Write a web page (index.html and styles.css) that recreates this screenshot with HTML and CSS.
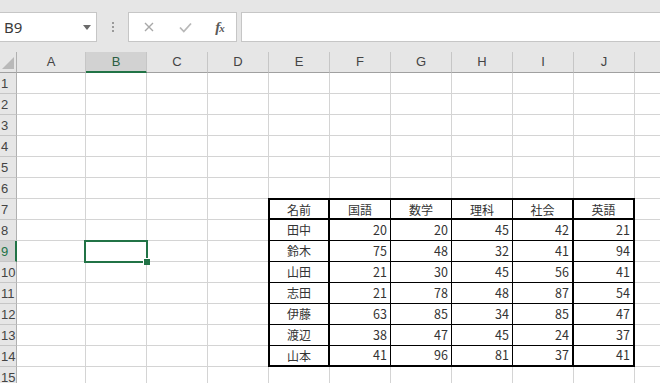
FILE: index.html
```html
<!DOCTYPE html>
<html lang="ja">
<head>
<meta charset="utf-8">
<title>Sheet</title>
<link rel="stylesheet" href="styles.css">
</head>
<body>
<div class="app">
  <div class="toolbar">
    <div class="namebox">
      <span class="name">B9</span>
      <svg class="dd" width="8" height="5" viewBox="0 0 8 5"><polygon points="0,0 8,0 4,5" fill="#6a6a6a"/></svg>
    </div>
    <div class="grip"><i></i><i></i><i></i></div>
    <div class="fbtns">
      <svg class="ico" width="10" height="10" viewBox="0 0 10 10"><path d="M1 1L9 9M9 1L1 9" stroke="#a8a8a8" stroke-width="1.4" fill="none"/></svg>
      <svg class="ico" width="13" height="11" viewBox="0 0 13 11"><path d="M1 5.5L4.8 9.5L12 1.5" stroke="#b8b8b8" stroke-width="1.8" fill="none"/></svg>
      <span class="fx">f<span class="fxx">x</span></span>
    </div>
    <div class="finput"></div>
  </div>

  <div class="sheet">
    <div class="corner"><svg width="12" height="12" viewBox="0 0 12 12"><polygon points="12,0 12,12 0,12" fill="#b9b9b9"/></svg></div>
    <div class="ch">A</div>
    <div class="ch sel-col">B</div>
    <div class="ch">C</div>
    <div class="ch">D</div>
    <div class="ch">E</div>
    <div class="ch">F</div>
    <div class="ch">G</div>
    <div class="ch">H</div>
    <div class="ch">I</div>
    <div class="ch">J</div>
    <div class="ch last"></div>

    <div class="cells"></div>

    <div class="rh">1</div>
    <div class="rh">2</div>
    <div class="rh">3</div>
    <div class="rh">4</div>
    <div class="rh">5</div>
    <div class="rh">6</div>
    <div class="rh">7</div>
    <div class="rh">8</div>
    <div class="rh sel-row">9</div>
    <div class="rh">10</div>
    <div class="rh">11</div>
    <div class="rh">12</div>
    <div class="rh">13</div>
    <div class="rh">14</div>
    <div class="rh">15</div>

    <div class="tbl">
      <div class="tc hd c1">名前</div><div class="tc hd">国語</div><div class="tc hd">数学</div><div class="tc hd">理科</div><div class="tc hd c5">社会</div><div class="tc hd c6">英語</div>

      <div class="tc nm c1">田中</div><div class="tc n">20</div><div class="tc n">20</div><div class="tc n">45</div><div class="tc n c5">42</div><div class="tc n c6">21</div>
      <div class="tc nm c1">鈴木</div><div class="tc n">75</div><div class="tc n">48</div><div class="tc n">32</div><div class="tc n c5">41</div><div class="tc n c6">94</div>
      <div class="tc nm c1">山田</div><div class="tc n">21</div><div class="tc n">30</div><div class="tc n">45</div><div class="tc n c5">56</div><div class="tc n c6">41</div>
      <div class="tc nm c1">志田</div><div class="tc n">21</div><div class="tc n">78</div><div class="tc n">48</div><div class="tc n c5">87</div><div class="tc n c6">54</div>
      <div class="tc nm c1">伊藤</div><div class="tc n">63</div><div class="tc n">85</div><div class="tc n">34</div><div class="tc n c5">85</div><div class="tc n c6">47</div>
      <div class="tc nm c1">渡辺</div><div class="tc n">38</div><div class="tc n">47</div><div class="tc n">45</div><div class="tc n c5">24</div><div class="tc n c6">37</div>
      <div class="tc nm c1 lr">山本</div><div class="tc n lr">41</div><div class="tc n lr">96</div><div class="tc n lr">81</div><div class="tc n c5 lr">37</div><div class="tc n c6 lr">41</div>
    </div>

    <div class="sel"></div>
  </div>
</div>
</body>
</html>
```

FILE: styles.css
```css
* { box-sizing: border-box; }

html, body {
  margin: 0;
  padding: 0;
  width: 660px;
  height: 383px;
  overflow: hidden;
  background: #ffffff;
}

.app {
  width: 660px;
  height: 383px;
  overflow: hidden;
  font-family: "Liberation Sans", "Noto Sans CJK JP", sans-serif;
}

/* ---------- formula bar ---------- */
.toolbar {
  height: 52px;
  background: #e6e6e6;
  display: flex;
  align-items: flex-start;
  padding-top: 12px;
}

.namebox {
  margin-left: -1px;
  width: 98px;
  height: 30px;
  background: #ffffff;
  border: 1px solid #c6c6c6;
  display: flex;
  align-items: center;
  padding-left: 4px;
}

.name {
  font-family: "Noto Sans", "Liberation Sans", sans-serif;
  font-size: 15px;
  color: #3a3a3a;
}

.dd {
  margin-left: auto;
  margin-right: 5px;
}

.grip {
  width: 31px;
  height: 30px;
  display: flex;
  flex-direction: column;
  align-items: center;
  justify-content: center;
  gap: 2px;
}

.grip i {
  display: block;
  width: 2px;
  height: 2px;
  background: #9a9a9a;
}

.fbtns {
  width: 109px;
  height: 30px;
  background: #ffffff;
  border: 1px solid #c6c6c6;
  display: grid;
  grid-template-columns: 36px 36px 1fr;
  align-items: center;
  justify-items: center;
  padding-left: 2px;
}

.fx {
  font-family: "Liberation Serif", "DejaVu Serif", serif;
  font-style: italic;
  font-weight: bold;
  font-size: 15px;
  color: #5a5a5a;
  letter-spacing: -1px;
}

.fxx {
  font-size: 11px;
}

.finput {
  margin-left: 4px;
  flex: 1;
  height: 30px;
  background: #ffffff;
  border: 1px solid #c6c6c6;
  border-right: none;
}

/* ---------- sheet ---------- */
.sheet {
  display: grid;
  grid-template-columns: 17px 69px repeat(10, 61px) 1fr;
  grid-template-rows: repeat(16, 21px);
  font-size: 13px;
  color: #444444;
}

.corner {
  background: #e6e6e6;
  border-right: 1px solid #b0b0b0;
  border-bottom: 1px solid #a0a0a0;
  display: flex;
  align-items: flex-end;
  justify-content: flex-end;
  padding: 0 2px 3px 0;
}

.ch {
  background: #e6e6e6;
  border-right: 1px solid #c6c6c6;
  border-bottom: 1px solid #a0a0a0;
  display: flex;
  align-items: center;
  justify-content: center;
  padding-bottom: 1px;
}

.ch.last {
  border-right: none;
}

.ch.sel-col {
  background: #d2d2d2;
  color: #2c5e43;
  border-bottom: 2px solid #217346;
  padding-bottom: 0;
}

.rh {
  grid-column: 1;
  background: #e6e6e6;
  border-right: 1px solid #b0b0b0;
  border-bottom: 1px solid #c6c6c6;
  display: flex;
  align-items: center;
  padding-left: 1px;
  overflow: visible;
  white-space: nowrap;
}

.rh.sel-row {
  background: #d2d2d2;
  color: #217346;
  border-right: 2px solid #217346;
}

.cells {
  grid-column: 2 / -1;
  grid-row: 2 / -1;
  background-color: #ffffff;
  background-image:
    repeating-linear-gradient(to bottom, transparent 0 20px, #d4d4d4 20px 21px),
    linear-gradient(to right, transparent 68px, #d4d4d4 68px 69px, transparent 69px),
    repeating-linear-gradient(to right, transparent 0 60px, #d4d4d4 60px 61px);
  background-size: 100% 100%, 100% 100%, calc(100% - 69px) 100%;
  background-position: 0 0, 0 0, 69px 0;
  background-repeat: no-repeat;
}

/* ---------- data table ---------- */
.tbl {
  grid-column: 6 / 12;
  grid-row: 8 / 16;
  margin: -1px 0 0 -1px;
  border: 2px solid #000000;
  background: #ffffff;
  display: grid;
  grid-template-columns: 60px repeat(4, 61px) 1fr;
  grid-template-rows: 20px repeat(6, 21px) 1fr;
  font-family: "Noto Sans CJK JP", sans-serif;
  font-size: 12px;
  color: #333333;
}

.tc {
  border-right: 1px solid #000000;
  border-bottom: 1px solid #000000;
  display: flex;
  align-items: center;
  line-height: 1;
}

.tc.hd {
  border-bottom-width: 2px;
  justify-content: center;
  padding-top: 1px;
}

.tc.nm {
  justify-content: center;
}

.tc.n {
  justify-content: flex-end;
  padding-right: 3px;
  font-size: 12.5px;
}

.tc.c1,
.tc.c5 {
  border-right-width: 2px;
}

.tc.c6 {
  border-right: none;
}

.tc.lr {
  border-bottom: none;
}

/* ---------- selection ---------- */
.sel {
  grid-column: 3;
  grid-row: 10;
  margin: -1px -1px -1px -2px;
  border: 2px solid #217346;
  position: relative;
}

.sel::after {
  content: "";
  position: absolute;
  right: -4px;
  bottom: -4px;
  width: 6px;
  height: 6px;
  background: #217346;
  border-left: 1px solid #ffffff;
  border-top: 1px solid #ffffff;
}
```
